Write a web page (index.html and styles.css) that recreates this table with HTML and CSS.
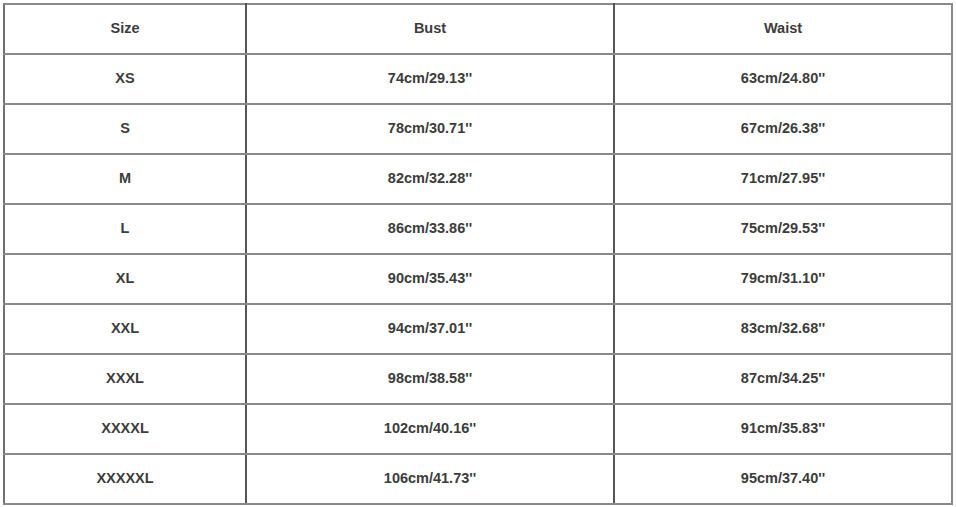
FILE: index.html
```html
<!DOCTYPE html>
<html>
<head>
<meta charset="utf-8">
<link rel="stylesheet" href="styles.css">
</head>
<body>
<table class="size-table">
  <colgroup>
    <col class="c1"><col class="c2"><col class="c3">
  </colgroup>
  <tr><td>Size</td><td>Bust</td><td>Waist</td></tr>
  <tr><td>XS</td><td>74cm/29.13''</td><td>63cm/24.80''</td></tr>
  <tr><td>S</td><td>78cm/30.71''</td><td>67cm/26.38''</td></tr>
  <tr><td>M</td><td>82cm/32.28''</td><td>71cm/27.95''</td></tr>
  <tr><td>L</td><td>86cm/33.86''</td><td>75cm/29.53''</td></tr>
  <tr><td>XL</td><td>90cm/35.43''</td><td>79cm/31.10''</td></tr>
  <tr><td>XXL</td><td>94cm/37.01''</td><td>83cm/32.68''</td></tr>
  <tr><td>XXXL</td><td>98cm/38.58''</td><td>87cm/34.25''</td></tr>
  <tr><td>XXXXL</td><td>102cm/40.16''</td><td>91cm/35.83''</td></tr>
  <tr><td>XXXXXL</td><td>106cm/41.73''</td><td>95cm/37.40''</td></tr>
</table>
</body>
</html>
```
FILE: styles.css
```css
html, body {
  margin: 0;
  padding: 0;
  background: #ffffff;
}
body {
  padding: 3px 0 0 3px;
}
.size-table {
  border-collapse: collapse;
  table-layout: fixed;
  width: 948px;
  font-family: "Liberation Sans", Arial, sans-serif;
  font-size: 14.5px;
  font-weight: bold;
  color: #3c3c3c;
}
.c1 { width: 242px; }
.c2 { width: 368px; }
.c3 { width: 338px; }
.size-table td {
  height: 46px;
  padding: 0 0 2px 0;
  text-align: center;
  vertical-align: middle;
  border-top: 2px solid #8a8a8a;
  border-bottom: 2px solid #8a8a8a;
  border-left: 2px solid #555555;
  border-right: 2px solid #555555;
}
.size-table td:first-child {
  border-left-color: #707070;
}
.size-table td:last-child {
  border-right-color: #8a8a8a;
}
```
